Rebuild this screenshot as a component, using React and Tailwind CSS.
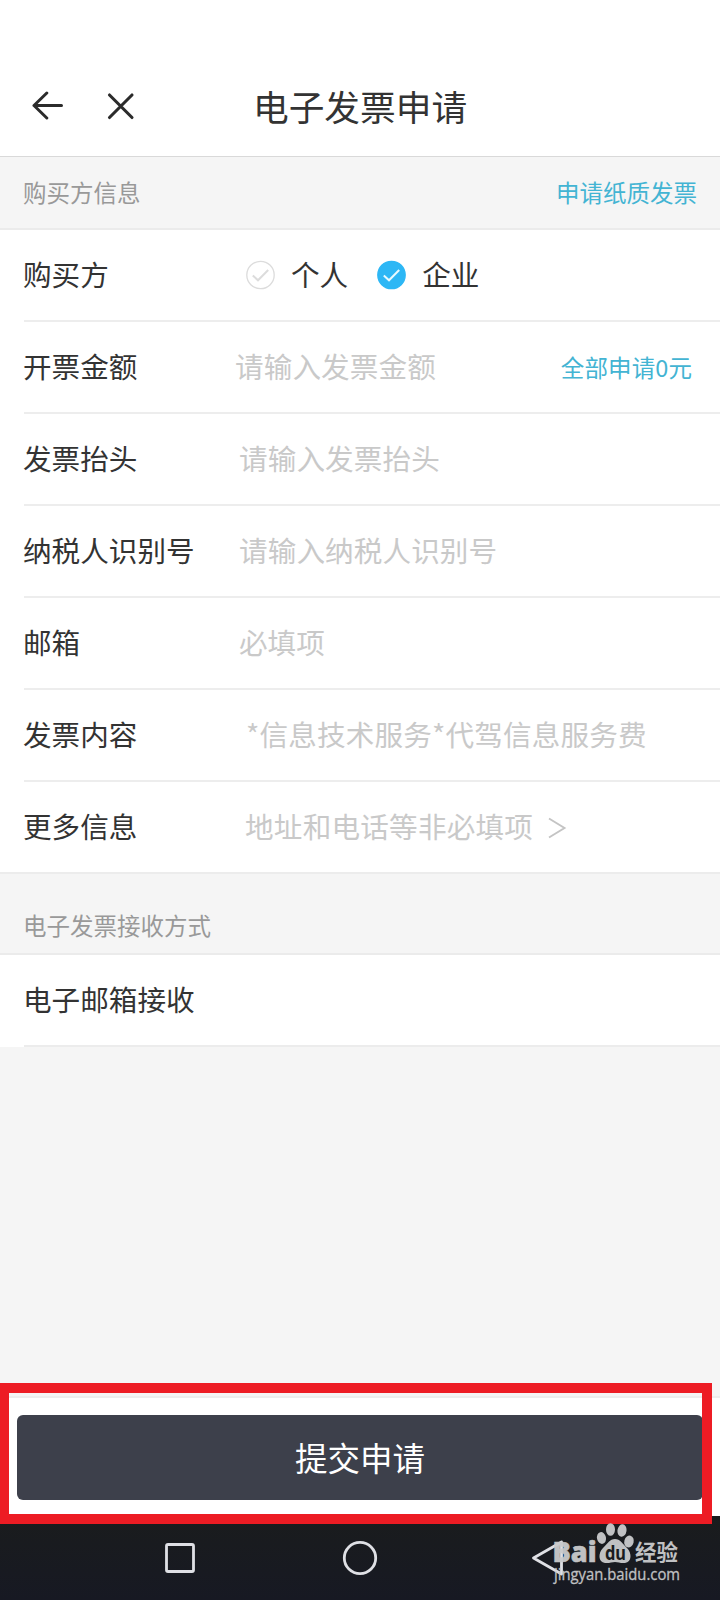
import { useState } from "react";

const fields = [
  { name: "amount", label: "开票金额", placeholder: "请输入发票金额", pad: "pl-[211px] tracking-[0.1px]", action: "全部申请0元" },
  { name: "title", label: "发票抬头", placeholder: "请输入发票抬头", pad: "pl-[215px] tracking-[0.1px]" },
  { name: "taxId", label: "纳税人识别号", placeholder: "请输入纳税人识别号", pad: "pl-[215px] tracking-[0.1px]" },
  { name: "email", label: "邮箱", placeholder: "必填项", pad: "pl-[215px]" },
  { name: "content", label: "发票内容", placeholder: "*信息技术服务*代驾信息服务费", pad: "pl-[222px] tracking-[0.15px]" },
  { name: "more", label: "更多信息", placeholder: "地址和电话等非必填项", pad: "pl-[221px] tracking-[0.22px]", arrow: true },
];

const Header = () => (
  <header className="grid h-[157px] grid-cols-[253px_1fr] border-b border-[#d9d9d9] bg-white pt-[55px]">
    <div className="flex h-[102px] items-center pl-8">
      <svg width="32" height="32" viewBox="0 0 32 32" fill="none" stroke="#2b2b2b" strokeWidth="3" strokeLinecap="round">
        <path d="M2 15.500H29.500M14.800 3L2 15.500L14.800 28" strokeLinejoin="round" />
      </svg>
      <svg className="ml-[41px]" width="32" height="32" viewBox="0 0 32 32" fill="none" stroke="#2b2b2b" strokeWidth="3.100" strokeLinecap="round">
        <path d="M4.500 5L27 27.500M27 5L4.500 27.500" />
      </svg>
    </div>
    <h1 className="flex h-[102px] items-center text-[35.700px] leading-none text-[#333]">电子发票申请</h1>
  </header>
);

const Radio = ({ label, checked, onClick }) => (
  <button type="button" onClick={onClick} className="flex items-center gap-4">
    <svg width="30" height="30" viewBox="0 0 30 30" fill="none">
      <circle cx="15.500" cy="15" r="13.700" fill={checked ? "#2db7f5" : "#fff"} stroke={checked ? "#2db7f5" : "#dcdcdc"} strokeWidth="1.300" />
      <path d="M7.800 15.500L13 20.300L23.200 10" stroke={checked ? "#e8faff" : "#dcdcdc"} strokeWidth="2" />
    </svg>
    <span className="-mt-0.5">{label}</span>
  </button>
);

const FieldRow = ({ field, last }) => (
  <div className={last ? "border-b-2 border-[#ececec] pl-6" : "ml-6 border-b-2 border-[#ededed]"}>
    <div className="grid h-[90px] grid-cols-1 items-center pb-0.5">
      <span className="col-start-1 row-start-1 -ml-px">{field.label}</span>
      <div className={`col-start-1 row-start-1 flex items-center pr-7 text-[#c9c9c9] ${field.pad}`}>
        <span>{field.placeholder}</span>
        {field.arrow && (
          <svg className="mt-1 ml-3.5" width="20" height="22" viewBox="0 0 20 22" fill="none" stroke="#c4c4c4" strokeWidth="1.900">
            <path d="M2 1.500L17.500 11L2 20.500" />
          </svg>
        )}
        {field.action && <span className="ml-auto pt-1 text-[23.500px] text-[#43b4d3]">{field.action}</span>}
      </div>
    </div>
  </div>
);

const Watermark = () => (
  <svg className="absolute left-[550px] top-[1520px]" width="136" height="78" viewBox="0 0 136 78" fill="#c9cacc">
    <g opacity="0.95">
      <text x="2.500" y="42" fontSize="28" fontWeight="900" fontFamily="'Noto Sans'" textLength="44" lengthAdjust="spacingAndGlyphs" stroke="#c9cacc" strokeWidth="0.600">Bai</text>
      <ellipse cx="51.500" cy="18" rx="4.500" ry="6" transform="rotate(-12 51.500 18)" />
      <ellipse cx="60.500" cy="9.500" rx="4.500" ry="6.300" />
      <ellipse cx="72" cy="10.500" rx="4.500" ry="6.300" transform="rotate(8 72 10.500)" />
      <ellipse cx="79" cy="21.500" rx="4.700" ry="6" transform="rotate(15 79 21.500)" />
      <path d="M65 19C70 19 73 24 77 28C82 33 82 42 75 43C71 43.500 68 42 65 42C62 42 59 43.500 55 43C48 42 48 33 53 28C57 24 60 19 65 19Z" />
      <text x="55" y="39.500" fontSize="19" fontWeight="700" fontFamily="'Noto Sans'" fill="#1a1c20" textLength="21" lengthAdjust="spacingAndGlyphs">du</text>
      <text x="85" y="40" fontSize="22" fontWeight="700" fontFamily="'Noto Sans CJK SC'" textLength="43" lengthAdjust="spacingAndGlyphs">经验</text>
      <text x="4" y="59.500" fontSize="15.500" fontWeight="500" fontFamily="'Open Sans'" textLength="126" lengthAdjust="spacingAndGlyphs" stroke="#c9cacc" strokeWidth="0.300">jingyan.baidu.com</text>
    </g>
  </svg>
);

const App = () => {
  const [buyer, setBuyer] = useState("company");

  return (
    <div className="relative flex h-[1600px] w-[720px] flex-col overflow-hidden bg-[#f5f5f5] font-['Noto_Sans_CJK_SC',sans-serif] text-[28.600px] leading-none text-[#333]">
      <Header />

      <div className="flex h-[73px] items-center justify-between border-b-2 border-[#ebebeb] pr-[23px] pl-[23px] text-[23.500px]">
        <span className="text-[#999]">购买方信息</span>
        <span className="text-[#43b4d3]">申请纸质发票</span>
      </div>

      <main className="bg-white">
        <div className="ml-6 flex h-[92px] items-center border-b-2 border-[#ededed]">
          <span className="-mt-0.5 -ml-px w-[222px]">购买方</span>
          <div className="flex gap-[28px]">
            <Radio label="个人" checked={buyer === "personal"} onClick={() => setBuyer("personal")} />
            <Radio label="企业" checked={buyer === "company"} onClick={() => setBuyer("company")} />
          </div>
        </div>
        {fields.map((field, i) => (
          <FieldRow key={field.name} field={field} last={i === fields.length - 1} />
        ))}
      </main>

      <div className="h-[81px] border-b-2 border-[#ebebeb] pt-10 pl-[23px] text-[23.500px] text-[#999]">电子发票接收方式</div>
      <div className="bg-white pl-6">
        <div className="flex h-[92px] items-center border-b-2 border-[#ececec] pb-0.5">
          <span className="-ml-px">电子邮箱接收</span>
        </div>
      </div>

      <footer className="mt-auto h-[120px] border-t-2 border-[#ededed] bg-white px-[17px] pt-[17px]">
        <button type="button" className="flex h-[85px] w-full items-center justify-center rounded-[6px] bg-[#3d404b] text-[32.500px] text-white">
          提交申请
        </button>
      </footer>

      <nav className="flex h-[84px] items-center bg-gradient-to-b from-[#1a1c1d] to-[#171923] pt-0.5 pl-[163px]">
        <svg width="400" height="40" viewBox="0 0 400 40" fill="none" stroke="#dfe0e5" strokeWidth="2.800">
          <rect x="3.500" y="5.500" width="27" height="27" rx="1.500" />
          <circle cx="197" cy="19" r="15.700" />
          <path d="M398.500 3L370.500 19L398.500 35Z" strokeLinejoin="round" />
        </svg>
      </nav>

      {/* highlight around the submit area */}
      <div className="absolute top-[1383px] left-0 h-[141px] w-[712px] border-[10px] border-l-[9px] border-[#ed1c24]" />
      <Watermark />
    </div>
  );
};

export default App;
